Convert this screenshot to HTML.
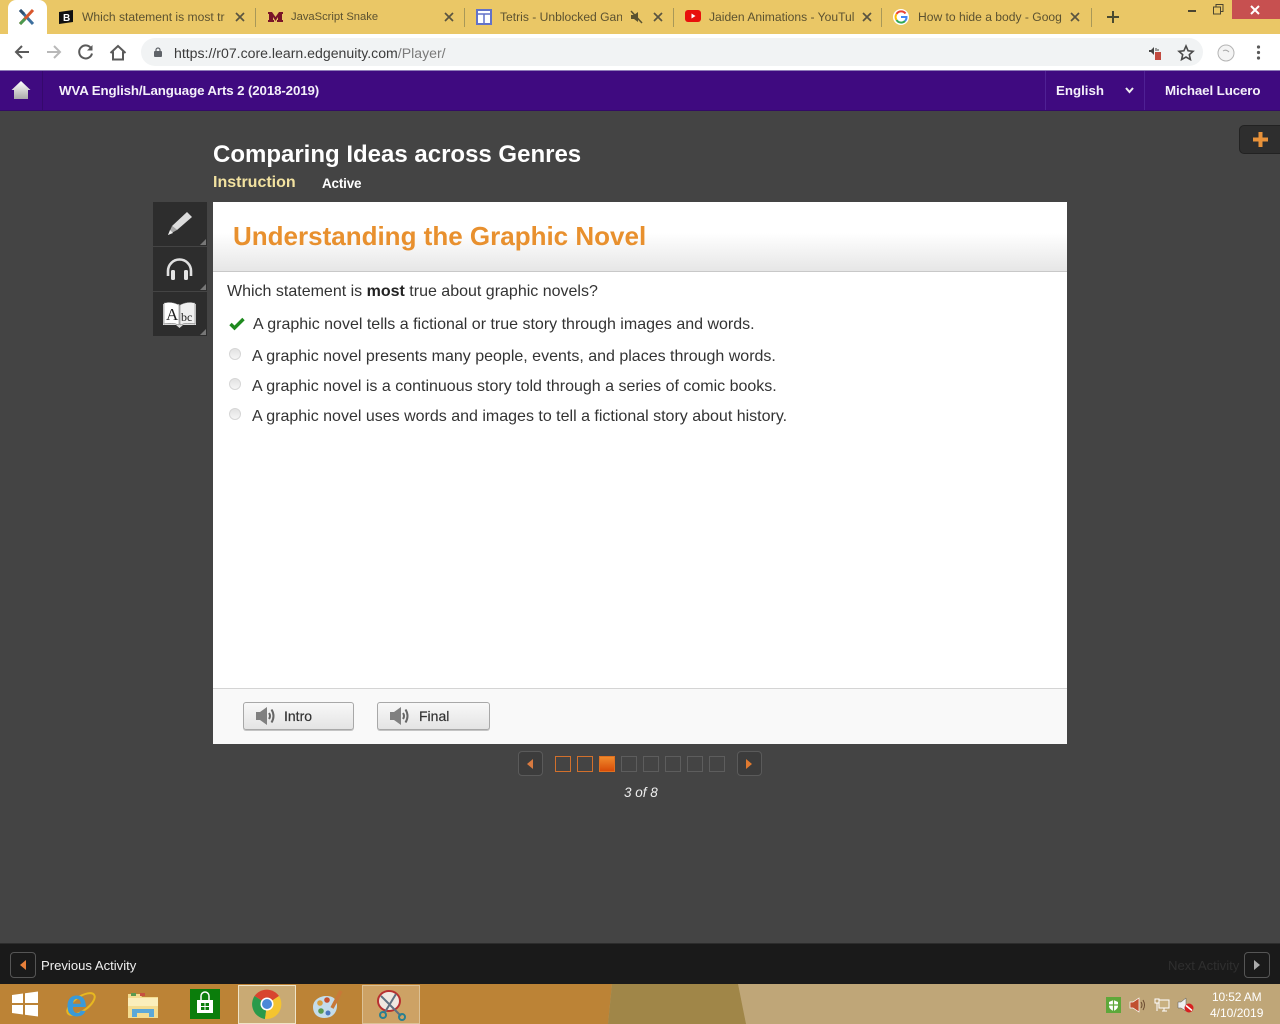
<!DOCTYPE html>
<html><head><meta charset="utf-8"><title>Edgenuity</title>
<style>
*{box-sizing:border-box}
html,body{margin:0;padding:0;width:1280px;height:1024px;overflow:hidden;background:#444;font-family:"Liberation Sans",sans-serif}
.a{position:absolute}
.t{position:absolute;white-space:nowrap;line-height:1}
svg{position:absolute;overflow:visible}
.tab{font-size:12.100px;color:#5c5230;top:10px;overflow:hidden;height:15px;line-height:14px}
.sep{position:absolute;top:8px;width:1px;height:19px;background:#a89858}
.q{font-size:16px;color:#333}
.sq{position:absolute;top:756px;width:16px;height:16px;border:1px solid #5d5d5d}
.sq.o{border-color:#d2702c}
.nb{position:absolute;width:25px;height:25px;border:1px solid #5a5a5a;border-radius:4px;background:#3c3c3c}
.btn{position:absolute;top:702px;height:28px;border:1px solid #a8a8a8;border-radius:3px;background:linear-gradient(#f8f8f8,#e4e4e4);box-shadow:0 1px 0 #c4c4c4}
.side{position:absolute;left:153px;width:54px;height:44px;background:#2d2d2d}
.cor{position:absolute;right:1px;bottom:1px;width:0;height:0;border-left:6px solid transparent;border-bottom:6px solid #777}
.rb{position:absolute;left:229px;width:12px;height:12px;border-radius:50%;background:linear-gradient(#e2e2e2,#f6f6f6);border:1px solid #d6d6d6}
</style></head><body>

<!-- Chrome tab strip -->
<div class="a" style="left:0;top:0;width:1280px;height:34px;background:#eac766"></div>
<div class="a" style="left:8px;top:0;width:39px;height:34px;background:#fff;border-radius:8px 8px 0 0"></div>
<svg style="left:17px;top:8px" width="20" height="18" viewBox="0 0 20 18">
<path d="M3 2L16 16" stroke="#3d6f9e" stroke-width="3"/><path d="M16 2L3 16" stroke="#d8562c" stroke-width="3"/><path d="M3 16L8 11" stroke="#4a9a50" stroke-width="3"/><path d="M3 2L7 6" stroke="#2f4f70" stroke-width="3"/></svg>
<svg style="left:58px;top:9px" width="16" height="16" viewBox="0 0 16 16"><path d="M1 3L15 1V13L1 15Z" fill="#111"/><text x="5" y="12" font-size="10" font-weight="700" fill="#fff" font-family="Liberation Sans">B</text></svg>
<div class="t tab" style="left:82px;width:144px">Which statement is most tr</div>
<svg style="left:235px;top:12px" width="10" height="10" viewBox="0 0 10 10"><path d="M1 1L9 9M9 1L1 9" stroke="#5a5440" stroke-width="1.700"/></svg>
<div class="sep" style="left:255px"></div>
<svg style="left:268px;top:11px" width="15" height="12" viewBox="0 0 15 12"><path d="M0 1H4L7.500 6L11 1H15V3H14V9H15V11H9V9H10V6L7.500 10L5 6V9H6V11H0V9H1V3H0Z" fill="#7a1528"/></svg>
<div class="t tab" style="left:291px;width:140px;font-size:11.200px">JavaScript Snake</div>
<svg style="left:444px;top:12px" width="10" height="10" viewBox="0 0 10 10"><path d="M1 1L9 9M9 1L1 9" stroke="#5a5440" stroke-width="1.700"/></svg>
<div class="sep" style="left:464px"></div>
<svg style="left:476px;top:9px" width="16" height="16" viewBox="0 0 16 16"><rect x="1" y="1" width="14" height="14" fill="#fff" stroke="#6272c8" stroke-width="2"/><path d="M1 5H15M8 5V15" stroke="#6272c8" stroke-width="1.500"/></svg>
<div class="t tab" style="left:500px;width:122px">Tetris - Unblocked Gan</div>
<svg style="left:629px;top:10px" width="14" height="14" viewBox="0 0 14 14"><path d="M2 5H5L9 2V12L5 9H2Z" fill="#5a5230"/><path d="M2 1L13 13" stroke="#5a5230" stroke-width="1.500"/></svg>
<svg style="left:653px;top:12px" width="10" height="10" viewBox="0 0 10 10"><path d="M1 1L9 9M9 1L1 9" stroke="#5a5440" stroke-width="1.700"/></svg>
<div class="sep" style="left:673px"></div>
<svg style="left:685px;top:10px" width="16" height="13" viewBox="0 0 16 13"><rect width="16" height="12" rx="3" fill="#e8100c"/><path d="M6.500 3.500L10.500 6L6.500 8.500Z" fill="#fff"/></svg>
<div class="t tab" style="left:709px;width:146px">Jaiden Animations - YouTul</div>
<svg style="left:862px;top:12px" width="10" height="10" viewBox="0 0 10 10"><path d="M1 1L9 9M9 1L1 9" stroke="#5a5440" stroke-width="1.700"/></svg>
<div class="sep" style="left:881px"></div>
<svg style="left:893px;top:9px" width="16" height="16" viewBox="0 0 16 16"><circle cx="8" cy="8" r="8" fill="#fff"/><path d="M12.500 4.500A5.500 5.500 0 0 0 3.500 5" stroke="#ea4335" stroke-width="2" fill="none"/><path d="M3.500 5A5.500 5.500 0 0 0 3.500 11" stroke="#fbbc05" stroke-width="2" fill="none"/><path d="M3.500 11A5.500 5.500 0 0 0 12 12" stroke="#34a853" stroke-width="2" fill="none"/><path d="M8 8H13.500A5.500 5.500 0 0 1 12 12" stroke="#4285f4" stroke-width="2" fill="none"/></svg>
<div class="t tab" style="left:918px;width:146px">How to hide a body - Goog</div>
<svg style="left:1070px;top:12px" width="10" height="10" viewBox="0 0 10 10"><path d="M1 1L9 9M9 1L1 9" stroke="#5a5440" stroke-width="1.700"/></svg>
<div class="sep" style="left:1091px"></div>
<svg style="left:1105px;top:9px" width="16" height="16" viewBox="0 0 16 16"><path d="M8 2V14M2 8H14" stroke="#4a4a30" stroke-width="2"/></svg>
<div class="a" style="left:1188px;top:10px;width:8px;height:2px;background:#4a4430"></div>
<svg style="left:1213px;top:4px" width="11" height="11" viewBox="0 0 11 11"><rect x=".5" y="3" width="7" height="7" fill="none" stroke="#4a4430"/><path d="M3 3V.5H10V7.500H8" fill="none" stroke="#4a4430"/></svg>
<div class="a" style="left:1232px;top:0;width:48px;height:19px;background:#c75050"></div>
<svg style="left:1250px;top:5px" width="10" height="10" viewBox="0 0 10 10"><path d="M1 1L9 9M9 1L1 9" stroke="#fff" stroke-width="2"/></svg>

<!-- Toolbar -->
<div class="a" style="left:0;top:34px;width:1280px;height:36px;background:#fff"></div>
<div class="a" style="left:141px;top:38px;width:1062px;height:28px;background:#f1f3f4;border-radius:14px"></div>
<svg style="left:13px;top:44px" width="18" height="16" viewBox="0 0 18 16"><path d="M16 8H3M9 2L3 8L9 14" fill="none" stroke="#5a5a5a" stroke-width="2"/></svg>
<svg style="left:45px;top:44px" width="18" height="16" viewBox="0 0 18 16"><path d="M2 8H15M9 2L15 8L9 14" fill="none" stroke="#b8b8b8" stroke-width="2"/></svg>
<svg style="left:77px;top:43px" width="18" height="18" viewBox="0 0 18 18"><path d="M14.500 6A6.500 6.500 0 1 0 15 10.500" fill="none" stroke="#5a5a5a" stroke-width="2"/><path d="M15.500 2V7.500H10Z" fill="#5a5a5a"/></svg>
<svg style="left:109px;top:44px" width="18" height="17" viewBox="0 0 18 17"><path d="M1.500 9L9 2L16.500 9M4 7.500V15.500H14V7.500" fill="none" stroke="#5a5a5a" stroke-width="2"/></svg>
<svg style="left:154px;top:47px" width="9" height="10" viewBox="0 0 9 10"><rect y="4" width="8" height="6" rx="1" fill="#5f6368"/><path d="M2 4.500V3A2 2 0 0 1 6 3V4.500" fill="none" stroke="#5f6368" stroke-width="1.200"/></svg>
<div class="t" style="left:174px;top:46px;font-size:14.100px;color:#3c3c3c">https://r07.core.learn.edgenuity.com<span style="color:#7a7a7a">/Player/</span></div>
<svg style="left:1149px;top:46px" width="14" height="14" viewBox="0 0 14 14"><path d="M0 4H2L5 1V9L2 6H0Z" fill="#444"/><rect x="6" y="6" width="6" height="8" fill="#c24a40"/><path d="M7 2V5M9 3V5" stroke="#444"/></svg>
<svg style="left:1177px;top:44px" width="18" height="18" viewBox="0 0 18 18"><path d="M9 2L11.100 6.800L16 7.300L12.300 10.600L13.400 15.500L9 13L4.600 15.500L5.700 10.600L2 7.300L6.900 6.800Z" fill="none" stroke="#4a4a4a" stroke-width="1.600"/></svg>
<svg style="left:1216px;top:44px" width="20" height="18" viewBox="0 0 20 18"><circle cx="10" cy="9" r="8" fill="#f4f4f4" stroke="#b4b4b4"/><path d="M7 7Q10 5 13 8" fill="none" stroke="#aaa"/></svg>
<svg style="left:1256px;top:45px" width="5" height="15" viewBox="0 0 5 15"><circle cx="2.500" cy="2" r="1.600" fill="#5a5a5a"/><circle cx="2.500" cy="7.500" r="1.600" fill="#5a5a5a"/><circle cx="2.500" cy="13" r="1.600" fill="#5a5a5a"/></svg>

<!-- Purple nav -->
<div class="a" style="left:0;top:70px;width:1280px;height:41px;background:#3f0a80;border-top:1px solid #8f7cb8;border-bottom:1px solid #330a66"></div>
<div class="a" style="left:42px;top:71px;width:1px;height:39px;background:#35096c"></div>
<div class="a" style="left:1045px;top:71px;width:1px;height:39px;background:#4f2194"></div>
<div class="a" style="left:1144px;top:71px;width:1px;height:39px;background:#4f2194"></div>
<svg style="left:11px;top:80px" width="20" height="20" viewBox="0 0 20 20"><defs><linearGradient id="h" x1="0" y1="0" x2="0" y2="1"><stop offset="0" stop-color="#fff"/><stop offset="1" stop-color="#aaa"/></linearGradient></defs><path d="M10 1L19.500 10H17V19H3V10H.5Z" fill="url(#h)"/></svg>
<div class="t" style="left:59px;top:84px;font-size:13.300px;font-weight:700;color:#f4f0fa;letter-spacing:-.12px">WVA English/Language Arts 2 (2018-2019)</div>
<div class="t" style="left:1056px;top:84px;font-size:13.300px;font-weight:700;color:#f4f0fa">English</div>
<svg style="left:1125px;top:87px" width="9" height="7" viewBox="0 0 9 7"><path d="M1 1L4.500 5L8 1" fill="none" stroke="#eee" stroke-width="2"/></svg>
<div class="t" style="left:1165px;top:84px;font-size:13.300px;font-weight:700;color:#f4f0fa;letter-spacing:-.1px">Michael Lucero</div>

<!-- plus tab -->
<div class="a" style="left:1239px;top:125px;width:41px;height:29px;background:#2e2e2e;border:1px solid #222;border-right:0;border-radius:5px 0 0 5px"></div>
<svg style="left:1253px;top:132px" width="15" height="15" viewBox="0 0 15 15"><path d="M5.500 0H9.500V5.500H15V9.500H9.500V15H5.500V9.500H0V5.500H5.500Z" fill="#e8923a"/></svg>

<!-- Titles -->
<div class="t" style="left:213px;top:143px;font-size:24px;font-weight:700;color:#fff">Comparing Ideas across Genres</div>
<div class="t" style="left:213px;top:175px;font-size:16px;font-weight:700;color:#f2e2a0">Instruction</div>
<div class="t" style="left:322px;top:177px;font-size:13.500px;font-weight:700;color:#fff;letter-spacing:-.2px">Active</div>

<!-- Side tools -->
<div class="side" style="top:202px"><div class="cor"></div></div>
<div class="side" style="top:247px"><div class="cor"></div></div>
<div class="side" style="top:292px"><div class="cor"></div></div>
<svg style="left:167px;top:210px" width="26" height="26" viewBox="0 0 26 26"><path d="M20 2L25 7L10 20L5 16Z" fill="#dcdcdc"/><path d="M5 16L10 20L1 25Z" fill="#a8a8a8"/><path d="M1 25L3 20L6 23Z" fill="#eee"/></svg>
<svg style="left:166px;top:258px" width="27" height="23" viewBox="0 0 27 23"><path d="M2 18V13A11.500 11.500 0 0 1 25 13V18" fill="none" stroke="#e0e0e0" stroke-width="2.600"/><rect x="5" y="12" width="4" height="10" rx="1.500" fill="#e4e4e4"/><rect x="18" y="12" width="4" height="10" rx="1.500" fill="#e4e4e4"/></svg>
<svg style="left:161px;top:301px" width="37" height="28" viewBox="0 0 37 28"><path d="M2 3H18L19 5L20 3H35V24H22L18.500 27L15 24H2Z" fill="#dcdcdc"/><path d="M3 2Q11 0 18 4V24Q11 21 3 23Z" fill="#fff" stroke="#666" stroke-width=".5"/><path d="M19 4Q26 0 34 2V23Q26 21 19 24Z" fill="#f0f0f0" stroke="#666" stroke-width=".5"/><text x="5" y="19" font-family="Liberation Serif" font-size="17" fill="#222">A</text><text x="20" y="20" font-family="Liberation Serif" font-size="12" fill="#222">bc</text></svg>

<!-- Content panel -->
<div class="a" style="left:213px;top:202px;width:854px;height:542px;background:#fff"></div>
<div class="a" style="left:213px;top:202px;width:854px;height:70px;background:linear-gradient(#fff 0,#fff 45%,#e6e6e6 100%);border-bottom:1px solid #c8c8c8"></div>
<div class="t" style="left:233px;top:223px;font-size:26px;font-weight:700;color:#e8902e">Understanding the Graphic Novel</div>
<div class="t q" style="left:227px;top:284px">Which statement is <b style="color:#222">most</b> true about graphic novels?</div>
<svg style="left:229px;top:316px" width="16" height="14" viewBox="0 0 16 14"><path d="M1.500 8L5.500 12L14.500 3" fill="none" stroke="#1f8a1f" stroke-width="3.400"/></svg>
<div class="t q" style="left:253px;top:317px">A graphic novel tells a fictional or true story through images and words.</div>
<div class="rb" style="top:348px"></div>
<div class="t q" style="left:252px;top:349px">A graphic novel presents many people, events, and places through words.</div>
<div class="rb" style="top:378px"></div>
<div class="t q" style="left:252px;top:379px">A graphic novel is a continuous story told through a series of comic books.</div>
<div class="rb" style="top:408px"></div>
<div class="t q" style="left:252px;top:409px">A graphic novel uses words and images to tell a fictional story about history.</div>

<div class="a" style="left:213px;top:688px;width:854px;height:56px;background:#f9f9f9;border-top:1px solid #d4d4d4"></div>
<div class="btn" style="left:243px;width:111px"></div>
<div class="btn" style="left:377px;width:113px"></div>
<svg style="left:255px;top:706px" width="22" height="20" viewBox="0 0 22 20"><path d="M1 6H5L12 1V19L5 14H1Z" fill="#808080"/><path d="M14 7Q16 10 14 13M16.500 3.500Q20.500 10 16.500 16.500" fill="none" stroke="#666" stroke-width="2"/></svg>
<svg style="left:389px;top:706px" width="22" height="20" viewBox="0 0 22 20"><path d="M1 6H5L12 1V19L5 14H1Z" fill="#808080"/><path d="M14 7Q16 10 14 13M16.500 3.500Q20.500 10 16.500 16.500" fill="none" stroke="#666" stroke-width="2"/></svg>
<div class="t" style="left:284px;top:709px;font-size:14px;color:#333;-webkit-text-stroke:.2px #333">Intro</div>
<div class="t" style="left:419px;top:709px;font-size:14px;color:#333;-webkit-text-stroke:.2px #333">Final</div>

<!-- Pager -->
<div class="nb" style="left:518px;top:751px"></div>
<svg style="left:527px;top:759px" width="6" height="10" viewBox="0 0 6 10"><path d="M6 0V10L0 5Z" fill="#d87a40"/></svg>
<div class="sq o" style="left:555px"></div>
<div class="sq o" style="left:577px"></div>
<div class="sq" style="left:599px;border-color:#e07020;background:linear-gradient(#f08a2c,#d84c08)"></div>
<div class="sq" style="left:621px"></div>
<div class="sq" style="left:643px"></div>
<div class="sq" style="left:665px"></div>
<div class="sq" style="left:687px"></div>
<div class="sq" style="left:709px"></div>
<div class="nb" style="left:737px;top:751px"></div>
<svg style="left:746px;top:759px" width="6" height="10" viewBox="0 0 6 10"><path d="M0 0V10L6 5Z" fill="#e07a30"/></svg>
<div class="t" style="left:624px;top:786px;font-size:13.500px;font-style:italic;color:#eee">3 of 8</div>

<!-- Bottom bar -->
<div class="a" style="left:0;top:943px;width:1280px;height:41px;background:#1a1a1a;border-top:1px solid #2c2c2c"></div>
<div class="a" style="left:10px;top:952px;width:26px;height:26px;border:1px solid #555;border-radius:4px"></div>
<svg style="left:20px;top:960px" width="6" height="10" viewBox="0 0 6 10"><path d="M6 0V10L0 5Z" fill="#e8803a"/></svg>
<div class="t" style="left:41px;top:959px;font-size:13.100px;color:#f0f0f0">Previous Activity</div>
<div class="t" style="left:1168px;top:959px;font-size:13.100px;color:#2f2f2f">Next Activity</div>
<div class="a" style="left:1244px;top:952px;width:26px;height:26px;border:1px solid #555;border-radius:4px"></div>
<svg style="left:1254px;top:960px" width="6" height="10" viewBox="0 0 6 10"><path d="M0 0V10L6 5Z" fill="#aaa"/></svg>

<!-- Taskbar -->
<div class="a" style="left:0;top:984px;width:1280px;height:40px;background:#bfa678"></div>
<svg style="left:0;top:984px" width="760" height="40" viewBox="0 0 760 40"><path d="M0 0H612L608 40H0Z" fill="#bc8336"/><path d="M612 0H738L746 40H608Z" fill="#a08648"/></svg>
<svg style="left:11px;top:990px" width="28" height="28" viewBox="0 0 28 28"><path d="M1 5L12 3.500V13H1ZM14 3.200L27 1.500V13H14ZM1 15H12V24.500L1 23ZM14 15H27V26.500L14 24.800Z" fill="#fff"/></svg>
<svg style="left:64px;top:987px" width="34" height="34" viewBox="0 0 34 34"><ellipse cx="17" cy="17" rx="16" ry="7" transform="rotate(-35 17 17)" fill="none" stroke="#e8b820" stroke-width="2"/><text x="2" y="29" font-family="Liberation Sans" font-size="38" font-weight="700" fill="#3a9ad8">e</text></svg>
<svg style="left:127px;top:990px" width="32" height="30" viewBox="0 0 32 30"><path d="M1 4H13L15 7H31V28H1Z" fill="#f4dc90"/><rect x="4" y="3" width="5" height="3" fill="#5a9a50"/><rect x="13" y="3" width="5" height="3" fill="#c85040"/><rect x="1" y="8" width="30" height="8" fill="#fbeebb"/><path d="M5 27V19H27V27H22V23H10V27Z" fill="#5ca8d8"/></svg>
<div class="a" style="left:190px;top:989px;width:30px;height:30px;background:#0b7d0b"></div>
<svg style="left:190px;top:989px" width="30" height="30" viewBox="0 0 30 30"><path d="M7 11H23V24H7Z" fill="#fff"/><path d="M11 11V7A4 4 0 0 1 19 7V11" fill="none" stroke="#fff" stroke-width="1.500"/><path d="M11 14H14.500V17H11ZM15.500 14H19V17H15.500ZM11 18H14.500V21H11ZM15.500 18H19V21H15.500Z" fill="#0b7d0b"/></svg>
<div class="a" style="left:238px;top:985px;width:58px;height:39px;background:#c9aa74;border:1px solid #efe4c8"></div>
<svg style="left:252px;top:989px" width="30" height="30" viewBox="0 0 30 30"><path d="M15 15L27 7A15 15 0 0 0 2.500 7Z" fill="#d8442f"/><path d="M15 15L2.500 7A15 15 0 0 0 13 30Z" fill="#2a9a4a"/><path d="M15 15L13 30A15 15 0 0 0 27 7Z" fill="#f4c430"/><circle cx="15" cy="15" r="6.500" fill="#fff"/><circle cx="15" cy="15" r="5" fill="#4a88d8"/></svg>
<svg style="left:312px;top:988px" width="32" height="32" viewBox="0 0 32 32"><path d="M1 19C1 10 12 6 20 9C27 12 27 25 18 29C9 32 1 28 1 19Z" fill="#c4dcea"/><circle cx="8" cy="15" r="2.800" fill="#d8a040"/><circle cx="15" cy="12" r="2.800" fill="#c85030"/><circle cx="9" cy="23" r="2.800" fill="#5a9a50"/><circle cx="16" cy="25" r="2.500" fill="#4a78c0"/><path d="M20 20L29 3" stroke="#c87838" stroke-width="3.500"/></svg>
<div class="a" style="left:362px;top:985px;width:58px;height:39px;background:#cda265;border:1px solid #dcc196"></div>
<svg style="left:376px;top:988px" width="32" height="33" viewBox="0 0 32 33"><ellipse cx="13" cy="13" rx="11" ry="10" fill="#f0e8e0" stroke="#b83030" stroke-width="2"/><path d="M5 8L25 28M20 6L9 24" stroke="#607080" stroke-width="2"/><circle cx="26" cy="29" r="3" fill="none" stroke="#2a8090" stroke-width="2"/><circle cx="7" cy="27" r="3" fill="none" stroke="#2a8090" stroke-width="2"/></svg>

<!-- Tray -->
<svg style="left:1106px;top:997px" width="15" height="16" viewBox="0 0 15 16"><rect width="15" height="16" fill="#5ea83a"/><path d="M7.500 3L12 5V9C12 11 10 13 7.500 14C5 13 3 11 3 9V5Z" fill="#fff"/><path d="M7.500 3V14M3 8H12" stroke="#5ea83a" stroke-width="1.200"/></svg>
<svg style="left:1130px;top:997px" width="16" height="16" viewBox="0 0 16 16"><path d="M0 5H3L9 1V15L3 11H0Z" fill="#c05030" stroke="#fff" stroke-width=".7"/><path d="M11 5Q13 8 11 11M13 3Q16 8 13 13" fill="none" stroke="#6a4a30" stroke-width="1"/></svg>
<svg style="left:1154px;top:998px" width="16" height="15" viewBox="0 0 16 15"><rect x="5" y="2" width="10" height="8" fill="#c8b080" stroke="#fff"/><rect x="1" y="1" width="4" height="4" fill="none" stroke="#fff"/><path d="M3 5V13M8 13H13M10 10V13" stroke="#fff"/></svg>
<svg style="left:1178px;top:997px" width="16" height="16" viewBox="0 0 16 16"><path d="M0 5H3L8 1V14L3 11H0Z" fill="#eee" stroke="#555" stroke-width=".5"/><circle cx="11" cy="11" r="4.500" fill="#d82020"/><path d="M8 8.500L14 13.500" stroke="#fff" stroke-width="1.500"/></svg>
<div class="t" style="left:1212px;top:991px;font-size:12px;color:#fff;letter-spacing:-.15px">10:52 AM</div>
<div class="t" style="left:1210px;top:1007px;font-size:12px;color:#fff">4/10/2019</div>
</body></html>
